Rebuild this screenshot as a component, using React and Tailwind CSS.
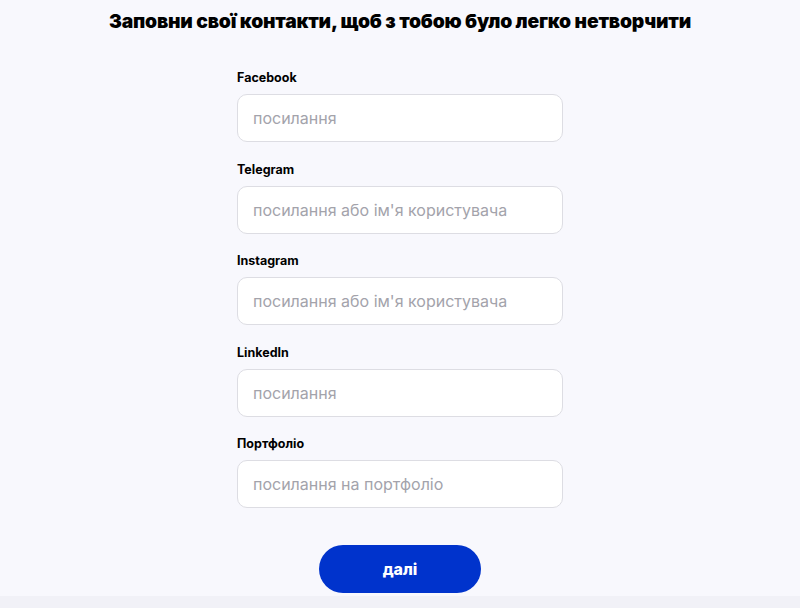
const fields = [
  { label: 'Facebook', placeholder: 'посилання' },
  { label: 'Telegram', placeholder: "посилання або ім'я користувача" },
  { label: 'Instagram', placeholder: "посилання або ім'я користувача" },
  { label: 'LinkedIn', placeholder: 'посилання' },
  { label: 'Портфоліо', placeholder: 'посилання на портфоліо' },
];

export default function App() {
  return (
    <div className="w-[800px] h-[608px] flex flex-col bg-[#f8f8fd] font-['Inter',sans-serif] overflow-hidden">
      <div className="flex-1 flex flex-col items-center">
        <h1 className="mt-[8px] text-[19.3px] leading-[26px] font-black text-black tracking-[-0.2px]">
          Заповни свої контакти, щоб з тобою було легко нетворчити
        </h1>
        <form className="mt-[36px] w-[326px] flex flex-col gap-[19.5px]">
          {fields.map((f) => (
            <div key={f.label} className="flex flex-col">
              <label className="text-[12.5px] leading-[16px] font-bold text-black">{f.label}</label>
              <input
                type="text"
                placeholder={f.placeholder}
                className="mt-[8px] h-[48px] w-full rounded-[10px] border border-[#dddde3] bg-white px-[15px] text-[16px] text-black placeholder:text-[#a3a3ab] outline-none"
              />
            </div>
          ))}
        </form>
        <button className="mt-[37px] w-[162px] h-[48px] rounded-full bg-[#0033cc] text-white text-[16px] font-extrabold">
          далі
        </button>
      </div>
      <div className="h-[12px] bg-[#f1f1f7]" />
    </div>
  );
}
